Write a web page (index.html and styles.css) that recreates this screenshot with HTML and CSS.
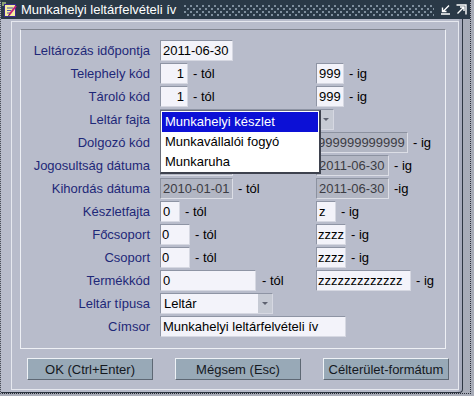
FILE: index.html
```html
<!DOCTYPE html>
<html lang="hu">
<head>
  <meta charset="UTF-8">
  <title>Munkahelyi leltárfelvételi ív</title>
  <link rel="stylesheet" href="styles.css">
</head>
<body>

<div class="window">
  <div class="titlebar">
    <svg class="app-icon" width="16" height="16" viewBox="0 0 16 16">
      <rect x="0" y="0" width="4" height="4" fill="#8aa070"/>
      <rect x="2.5" y="2.5" width="11" height="12" fill="#f6eea0" stroke="#3a2a90"/>
      <path d="M5 6 H11 M5 8.5 H9 M5 11 H8" stroke="#5050b0"/>
      <path d="M7 13 L14 4" stroke="#c0207a" stroke-width="2"/>
      <path d="M6.5 14 L7.5 12.5" stroke="#202020"/>
    </svg>
    <span class="title">Munkahelyi leltárfelvételi ív</span>
    <span class="dots"></span>
    <svg class="ctl" width="11" height="11" viewBox="0 0 11 11">
      <path d="M9 1.5 L3 7.5 M2.5 3.5 V7.5 H6.5 M1 10 H10" stroke="#fff" stroke-width="1.4" fill="none"/>
    </svg>
    <svg class="ctl" width="11" height="11" viewBox="0 0 11 11">
      <path d="M0.5 1 H10 V10.5 M1.5 9.5 L8 3 M4 3 H8 V7" stroke="#fff" stroke-width="1.4" fill="none"/>
    </svg>
  </div>

  <div class="body">
    <div class="client">
      <div class="frame">
        <div class="panel">
          <div class="form">
            <label>Leltározás időpontja</label>
            <div class="field"><input class="box w-date" value="2011-06-30"></div>
            <div class="field"></div>

            <label>Telephely kód</label>
            <div class="field"><input class="box w-small right" value="1"><span class="sfx">- tól</span></div>
            <div class="field"><input class="box w-small" value="999"><span class="sfx">- ig</span></div>

            <label>Tároló kód</label>
            <div class="field"><input class="box w-small right" value="1"><span class="sfx">- tól</span></div>
            <div class="field"><input class="box w-small" value="999"><span class="sfx">- ig</span></div>

            <label>Leltár fajta</label>
            <div class="field span2">
              <!-- the open list below covers the selected text -->
              <div class="select w-fajta"><span class="sel-text"></span><span class="arrow"></span></div>
            </div>

            <label>Dolgozó kód</label>
            <div class="field"><input class="box w-code off" value="" disabled></div>
            <div class="field"><input class="box w-worker off" value="999999999999" disabled><span class="sfx">- ig</span></div>

            <label>Jogosultság dátuma</label>
            <div class="field"><input class="box w-date off" value="" disabled></div>
            <div class="field"><input class="box w-date off" value="2011-06-30" disabled><span class="sfx">- ig</span></div>

            <label>Kihordás dátuma</label>
            <div class="field"><input class="box w-date off" value="2010-01-01" disabled><span class="sfx">- tól</span></div>
            <div class="field"><input class="box w-date off" value="2011-06-30" disabled><span class="sfx">-ig</span></div>

            <label>Készletfajta</label>
            <div class="field"><input class="box w-one" value="0"><span class="sfx">- tól</span></div>
            <div class="field"><input class="box w-one" value="z"><span class="sfx">- ig</span></div>

            <label>Főcsoport</label>
            <div class="field"><input class="box w-group" value="0"><span class="sfx">- tól</span></div>
            <div class="field"><input class="box w-group" value="zzzz"><span class="sfx">- ig</span></div>

            <label>Csoport</label>
            <div class="field"><input class="box w-group" value="0"><span class="sfx">- tól</span></div>
            <div class="field"><input class="box w-group" value="zzzz"><span class="sfx">- ig</span></div>

            <label>Termékkód</label>
            <div class="field"><input class="box w-code" value="0"><span class="sfx sfx-wide">- tól</span></div>
            <div class="field"><input class="box w-product" value="zzzzzzzzzzzzz"><span class="sfx">- ig</span></div>

            <label>Leltár típusa</label>
            <div class="field">
              <div class="select w-type"><span class="sel-text">Leltár</span><span class="arrow"></span></div>
            </div>
            <div class="field"></div>

            <label>Címsor</label>
            <div class="field span2"><input class="box w-title" value="Munkahelyi leltárfelvételi ív"></div>
          </div>

          <ul class="dropdown">
            <li class="active">Munkahelyi készlet</li>
            <li>Munkavállalói fogyó</li>
            <li>Munkaruha</li>
          </ul>
        </div>

        <div class="buttons">
          <button>OK (Ctrl+Enter)</button>
          <button>Mégsem (Esc)</button>
          <button>Célterület-formátum</button>
        </div>
      </div>
    </div>
    <div class="strip"></div>
  </div>
</div>

</body>
</html>
```

FILE: styles.css
```css
body {
  margin: 0;
  background: #a8acb8;
  font-family: "Liberation Sans", Arial, sans-serif;
  font-size: 13px;
}

.window {
  width: 469px;
  height: 393px;
  border-left: 1px dotted #4a4e5a;
  border-right: 1px dotted #2a2e38;
  border-bottom: 1px dotted #2a2e38;
  display: flex;
  flex-direction: column;
}

.titlebar {
  height: 19px;
  background: #2a3947;
  color: #fff;
  display: flex;
  align-items: center;
}

.app-icon {
  margin-left: 1px;
  flex: none;
}

.title {
  margin-left: 3px;
  font-size: 13px;
  white-space: nowrap;
}

.dots {
  flex: 1;
  height: 12px;
  margin: 0 6px 0 8px;
  background:
    radial-gradient(circle at 1px 1px, #7f8f9e 0.9px, transparent 1.1px) 0 1px / 6px 6px,
    radial-gradient(circle at 1px 1px, #7f8f9e 0.9px, transparent 1.1px) 3px 4px / 6px 6px;
}

.ctl {
  flex: none;
  margin-right: 3px;
}

.ctl:last-child {
  margin-right: 3px;
  margin-left: 2px;
}

.body {
  flex: 1;
  display: flex;
}

.client {
  width: 461px;
  background: #b8bccb;
  border-right: 1px solid #2e3642;
  border-bottom: 1px solid #2e3642;
  border-bottom-right-radius: 4px;
  box-shadow: inset -3px 0 0 #a6aabb;
}

.strip {
  flex: 1;
}

.frame {
  box-sizing: border-box;
  width: 448px;
  height: 369px;
  margin: 2px 0 0 10px;
  border: 1px solid #e6e8ef;
}

.panel {
  position: relative;
  box-sizing: border-box;
  width: 426px;
  height: 320px;
  margin: 7px 0 0 8px;
  border: 1px solid #eef0f5;
  border-top-color: #80848f;
  padding-top: 9px;
}

.form {
  display: grid;
  grid-template-columns: 139px 156px 1fr;
  grid-auto-rows: 23px;
}

.form label {
  color: #1e2878;
  text-align: right;
  padding-right: 10px;
  line-height: 23px;
  white-space: nowrap;
}

.field {
  display: flex;
  align-items: center;
}

.span2 {
  grid-column: span 2;
}

.box {
  box-sizing: border-box;
  height: 21px;
  margin: 0;
  padding: 0 2px;
  font: 13px "Liberation Sans", Arial, sans-serif;
  color: #000;
  background: #f3f3fa;
  border: 1px solid #d6d8e2;
  border-top-color: #8e94a4;
  border-left-color: #8e94a4;
  outline: none;
}

.box.right {
  text-align: right;
  padding-right: 3px;
}

.box.off {
  background: #b2b6c3;
  color: #3c3c44;
  border-color: #dcdee6;
  border-top-color: #8c92a0;
  border-left-color: #8c92a0;
}

.w-date { width: 73px; }
.w-small { width: 28px; }
.w-one { width: 20px; }
.w-group { width: 30px; padding: 0 1px; }
.w-code { width: 96px; }
.w-worker { width: 92px; padding: 0 1px; }
.w-product { width: 95px; padding: 0 1px; }
.w-title { width: 186px; }

.sfx {
  margin-left: 5px;
  white-space: nowrap;
}

.sfx-wide {
  margin-left: 6px;
}

.select {
  box-sizing: border-box;
  height: 21px;
  display: flex;
  align-items: stretch;
  background: #f3f3fa;
  border: 1px solid #d6d8e2;
  border-top-color: #8e94a4;
  border-left-color: #8e94a4;
}

.w-fajta { width: 174px; }
.w-type { width: 113px; }

.sel-text {
  flex: 1;
  padding-left: 3px;
  line-height: 19px;
}

.arrow {
  width: 14px;
  background: #c6cad4;
  position: relative;
}

.arrow::after {
  content: "";
  position: absolute;
  left: 4px;
  top: 8px;
  border-left: 3px solid transparent;
  border-right: 3px solid transparent;
  border-top: 3px solid #5e6270;
}

.dropdown {
  position: absolute;
  left: 139px;
  top: 80px;
  width: 161px;
  box-sizing: border-box;
  margin: 0;
  padding: 1px 1px 0;
  list-style: none;
  background: #fff;
  border: 1px solid #6a6e7a;
  border-right: 2px solid #3e424e;
  border-bottom: 2px solid #3e424e;
}

.dropdown li {
  height: 20px;
  line-height: 20px;
  padding-left: 3px;
  color: #000;
}

.dropdown li.active {
  background: #0c10d6;
  color: #fff;
}

.buttons {
  display: flex;
  gap: 22px;
  margin: 9px 0 0 15px;
}

.buttons button {
  width: 126px;
  height: 22px;
  padding: 0;
  font: 13px "Liberation Sans", Arial, sans-serif;
  color: #14181e;
  background: #98a9b7;
  border: 1px solid #5e6874;
  border-top-color: #eef2f6;
  border-left-color: #eef2f6;
}
```
